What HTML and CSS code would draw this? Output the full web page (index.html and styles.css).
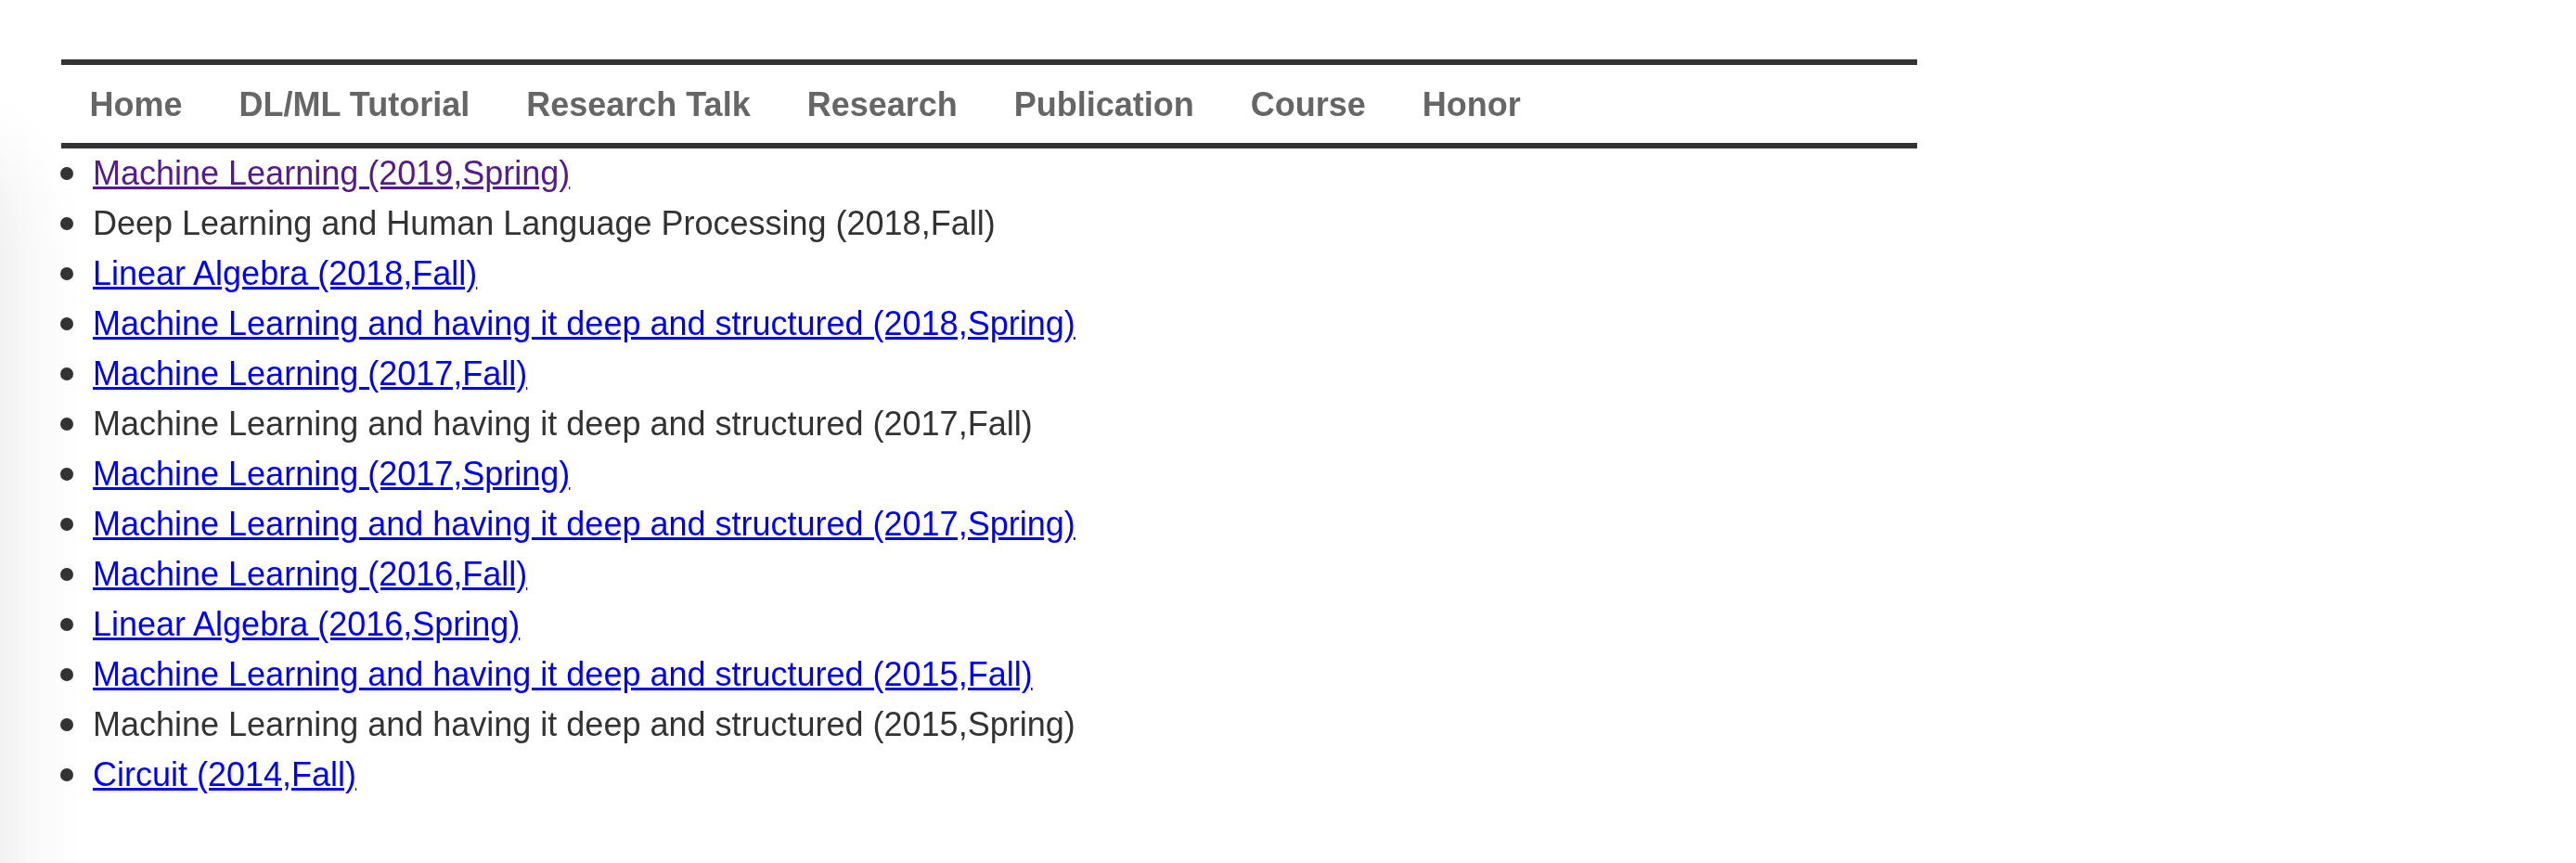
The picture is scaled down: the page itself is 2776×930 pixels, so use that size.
FILE: index.html
```html
<!DOCTYPE html>
<html lang="en">
<head>
<meta charset="utf-8">
<title>Course</title>
<link rel="stylesheet" href="styles.css">
</head>
<body>
<div class="edge-shadow"></div>
<div class="page">
  <nav class="menu">
    <a class="menu-item" href="#">Home</a>
    <a class="menu-item" href="#">DL/ML Tutorial</a>
    <a class="menu-item" href="#">Research Talk</a>
    <a class="menu-item" href="#">Research</a>
    <a class="menu-item" href="#">Publication</a>
    <a class="menu-item" href="#">Course</a>
    <a class="menu-item" href="#">Honor</a>
  </nav>
  <ul class="courses">
    <li><a class="visited" href="#">Machine Learning (2019,Spring)</a></li>
    <li>Deep Learning and Human Language Processing (2018,Fall)</li>
    <li><a href="#">Linear Algebra (2018,Fall)</a></li>
    <li><a href="#">Machine Learning and having it deep and structured (2018,Spring)</a></li>
    <li><a href="#">Machine Learning (2017,Fall)</a></li>
    <li>Machine Learning and having it deep and structured (2017,Fall)</li>
    <li><a href="#">Machine Learning (2017,Spring)</a></li>
    <li><a href="#">Machine Learning and having it deep and structured (2017,Spring)</a></li>
    <li><a href="#">Machine Learning (2016,Fall)</a></li>
    <li><a href="#">Linear Algebra (2016,Spring)</a></li>
    <li><a href="#">Machine Learning and having it deep and structured (2015,Fall)</a></li>
    <li>Machine Learning and having it deep and structured (2015,Spring)</li>
    <li><a href="#">Circuit (2014,Fall)</a></li>
  </ul>
</div>
</body>
</html>
```
FILE: styles.css
```css
html, body {
  margin: 0;
  padding: 0;
  background: #ffffff;
}

body {
  font-family: "Liberation Sans", Arial, Helvetica, sans-serif;
  color: #333333;
  font-size: 36px;
  overflow: hidden;
}

.edge-shadow {
  position: fixed;
  left: -120px;
  top: 170px;
  width: 120px;
  height: 2000px;
  border-radius: 120px;
  box-shadow: 0 0 90px 10px rgba(0, 0, 0, 0.09);
  pointer-events: none;
}

.page {
  position: relative;
  width: 2000px;
  margin-left: 66px;
  padding-top: 64px;
}

.menu {
  display: flex;
  align-items: center;
  height: 82px;
  border-top: 6px solid #333333;
  border-bottom: 6px solid #333333;
  padding-top: 2px;
  box-sizing: content-box;
}

.menu-item {
  padding: 0 30.5px;
  font-weight: bold;
  font-size: 36px;
  color: #666666;
  text-decoration: none;
  line-height: 1;
}

.courses {
  margin: 0;
  padding: 0 0 0 34px;
  line-height: 54px;
  list-style: none;
}

.courses li::before {
  content: "";
  display: inline-block;
  width: 14px;
  height: 14px;
  border-radius: 50%;
  background: #333333;
  margin-left: -35px;
  margin-right: 21px;
  vertical-align: 5px;
}

.courses a {
  color: #0000ee;
  text-decoration: underline;
}

.courses a.visited {
  color: #551a8b;
}
```
